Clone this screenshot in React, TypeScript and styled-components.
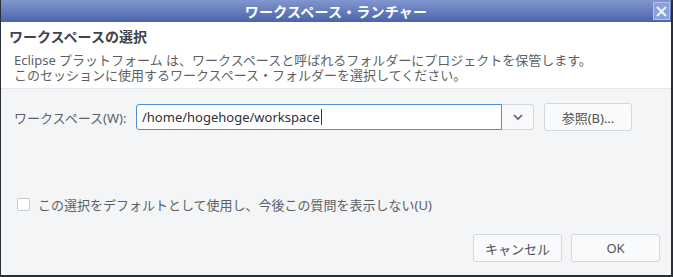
import styled, { createGlobalStyle } from "styled-components";

const Global = createGlobalStyle`
  html, body {
    margin: 0;
    padding: 0;
    background: #f4f5f7;
  }
  * {
    box-sizing: border-box;
  }
`;

const FONT = `"Noto Sans", "Noto Sans CJK JP", sans-serif`;

const Window = styled.div`
  width: 673px;
  height: 277px;
  display: flex;
  flex-direction: column;
  border-left: 1px solid #2a2e38;
  border-right: 2px solid #2a2e38;
  border-bottom: 2px solid #2a2e38;
  background: #f4f5f7;
  font-family: ${FONT};
  color: #5c5f66;
  overflow: hidden;
`;

const TitleBar = styled.div`
  height: 22px;
  flex: none;
  display: flex;
  align-items: center;
  justify-content: center;
  position: relative;
  background: linear-gradient(#8296cf, #4b65aa);
  color: #ffffff;
  font-size: 14px;
  font-weight: 700;
  letter-spacing: 0.2px;
`;

const CloseBox = styled.div`
  position: absolute;
  right: 1px;
  top: 2px;
  width: 17px;
  height: 18px;
  background: #8c9fd6;
  border: 1px solid #b4c1e6;
  display: flex;
  align-items: center;
  justify-content: center;
`;

const Header = styled.div`
  flex: none;
  background: #ffffff;
  padding: 6px 0 5px 0;
  border-bottom: 1px solid #e3e5e9;
`;

const Heading = styled.div`
  padding-left: 8px;
  font-size: 14px;
  line-height: 17px;
  font-weight: 700;
  color: #3f4248;
`;

const Description = styled.div`
  margin-top: 8px;
  padding-left: 13px;
  font-size: 13px;
  line-height: 15px;
  color: #5c5f66;
`;

const Body = styled.div`
  flex: 1;
  display: flex;
  flex-direction: column;
  padding: 14px 11px 0 13px;
`;

const PathRow = styled.div`
  display: flex;
  align-items: center;
  height: 28px;
`;

const Label = styled.div`
  width: 122px;
  font-size: 13px;
`;

const PathInput = styled.div`
  width: 366px;
  height: 26px;
  display: flex;
  align-items: center;
  padding-left: 5px;
  background: #ffffff;
  border: 1px solid #4a90d9;
  border-radius: 3px 0 0 3px;
  font-size: 13px;
  color: #2e3136;
`;

const Caret = styled.span`
  display: inline-block;
  width: 1px;
  height: 16px;
  background: #2e3136;
  margin-left: 1px;
`;

const DropButton = styled.div`
  width: 32px;
  height: 26px;
  display: flex;
  align-items: center;
  justify-content: center;
  background: #f8f9fa;
  border: 1px solid #d3d7de;
  border-left: none;
  border-radius: 0 3px 3px 0;
`;

const Button = styled.div<{ $width: number }>`
  width: ${(p) => p.$width}px;
  height: 28px;
  display: flex;
  align-items: center;
  justify-content: center;
  background: #f9fafb;
  border: 1px solid #d3d7de;
  border-radius: 3px;
  font-size: 13px;
  color: #4f5258;
`;

const BrowseButton = styled(Button)`
  margin-left: 10px;
`;

const CheckRow = styled.div`
  display: flex;
  align-items: center;
  margin-top: 65px;
  height: 16px;
  padding-left: 3px;
  font-size: 13px;
`;

const CheckBox = styled.div`
  width: 13px;
  height: 13px;
  margin-right: 8px;
  background: #ffffff;
  border: 1px solid #c5c9d1;
  border-radius: 2px;
`;

const Footer = styled.div`
  display: flex;
  justify-content: flex-end;
  gap: 9px;
  margin-top: 22px;
`;

export default function App() {
  return (
    <>
      <Global />
      <Window>
        <TitleBar>
          ワークスペース・ランチャー
          <CloseBox>
            <svg width="13" height="13" viewBox="0 0 13 13">
              <path d="M2 2 L11 11 M11 2 L2 11" stroke="#eef1fb" strokeWidth="2.2" />
            </svg>
          </CloseBox>
        </TitleBar>
        <Header>
          <Heading>ワークスペースの選択</Heading>
          <Description>
            Eclipse プラットフォーム は、ワークスペースと呼ばれるフォルダーにプロジェクトを保管します。
            <br />
            このセッションに使用するワークスペース・フォルダーを選択してください。
          </Description>
        </Header>
        <Body>
          <PathRow>
            <Label>ワークスペース(W):</Label>
            <PathInput>
              /home/hogehoge/workspace
              <Caret />
            </PathInput>
            <DropButton>
              <svg width="12" height="8" viewBox="0 0 12 8">
                <path d="M2 2 L6 6 L10 2" fill="none" stroke="#5a5d63" strokeWidth="1.6" />
              </svg>
            </DropButton>
            <BrowseButton $width={88}>参照(B)...</BrowseButton>
          </PathRow>
          <CheckRow>
            <CheckBox />
            この選択をデフォルトとして使用し、今後この質問を表示しない(U)
          </CheckRow>
          <Footer>
            <Button $width={89}>キャンセル</Button>
            <Button $width={89}>OK</Button>
          </Footer>
        </Body>
      </Window>
    </>
  );
}
